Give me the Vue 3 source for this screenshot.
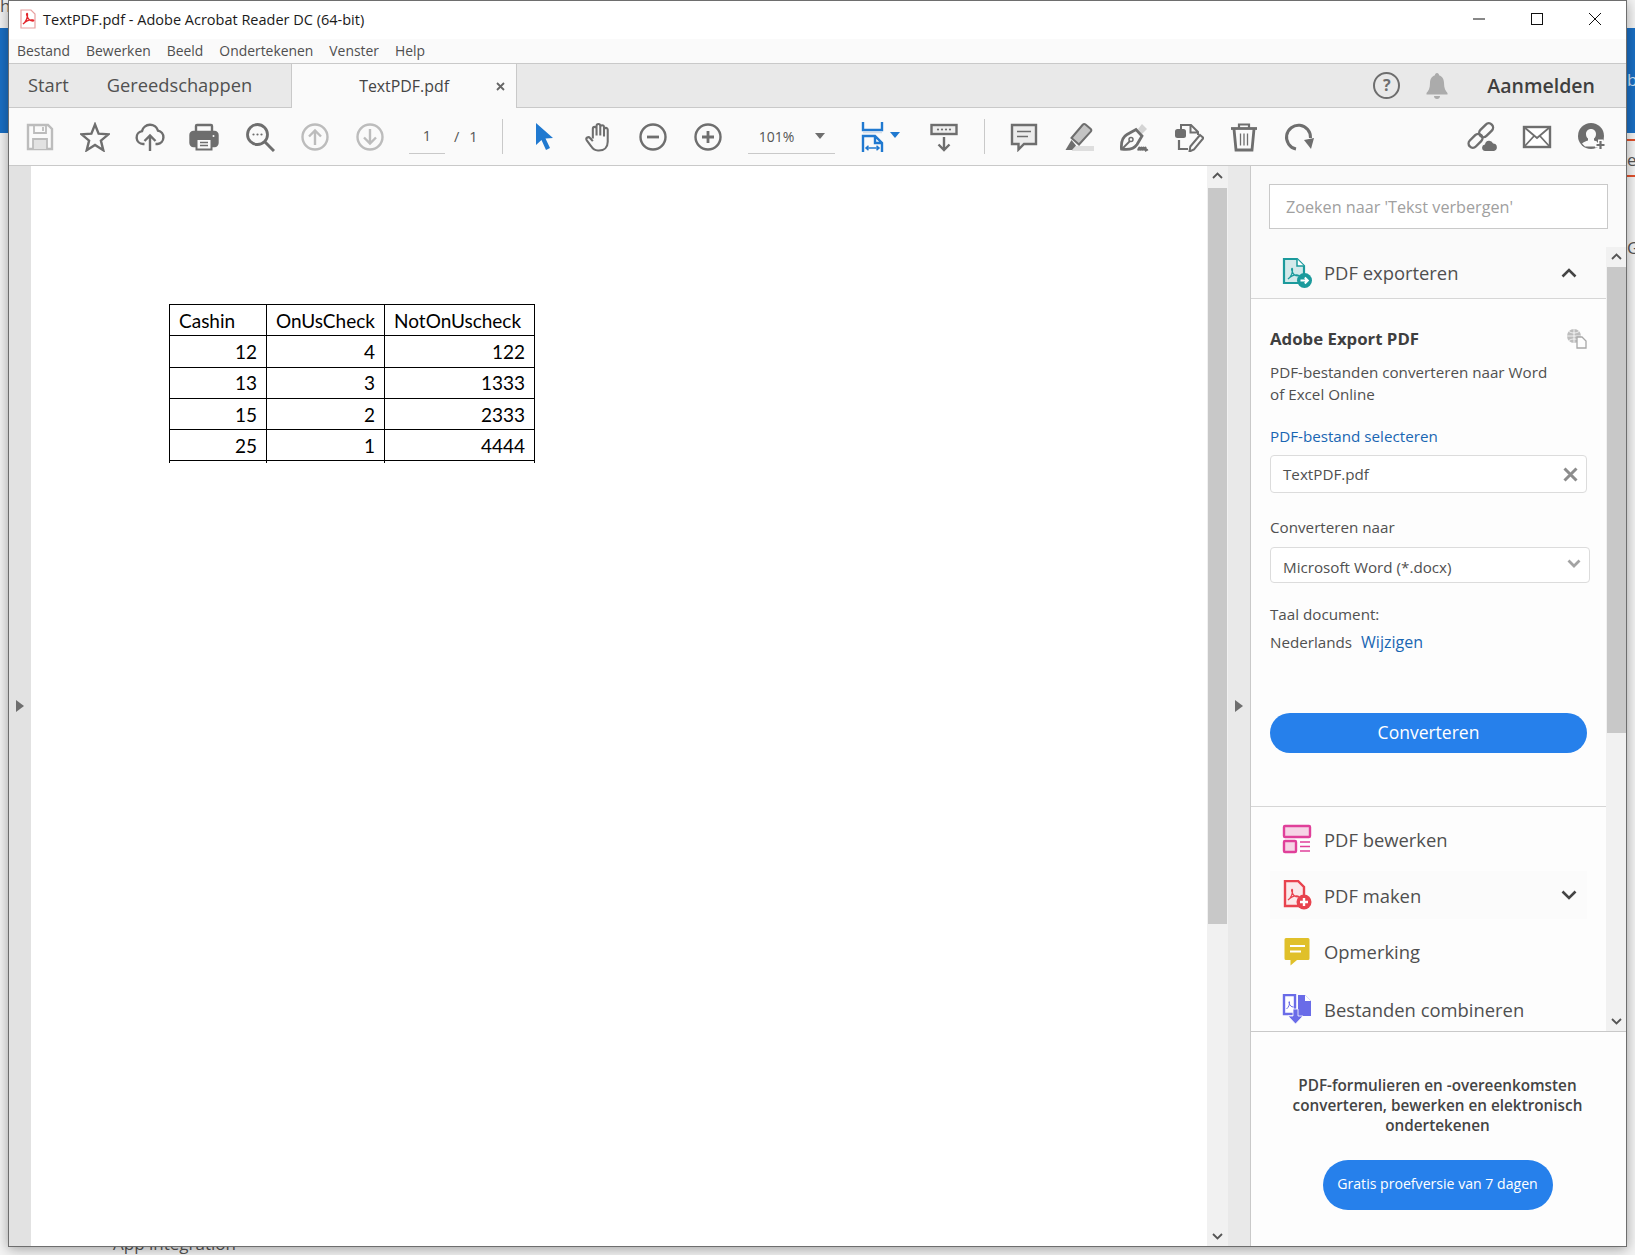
<template>
  <div class="desktop">
    <!-- what is visible behind the Acrobat window -->
    <div class="bg-blue"></div>
    <div class="bg-red bg-red-1"></div>
    <div class="bg-red bg-red-2"></div>
    <span class="bg-text bg-h">h</span>
    <span class="bg-text bg-b">b</span>
    <span class="bg-text bg-e">e</span>
    <span class="bg-text bg-g">G</span>
    <span class="bg-text bg-app">App integration</span>

    <div class="window">
      <!-- title bar -->
      <div class="titlebar">
        <svg class="title-icon" width="16" height="20" viewBox="0 0 16 20">
          <path d="M1 1h10l4 4v14H1z" fill="#fff" stroke="#e8a0a0" stroke-width="1.2" />
          <path d="M3 15c3-2 5-7 4.500-10-.5-1.500-1.500 0-.5 2 1 3 3 5 6 5 1 0 1-1 0-1-3-.5-7 1-10 4z" fill="none" stroke="#e4262c" stroke-width="1.300" />
        </svg>
        <span class="title-text">TextPDF.pdf - Adobe Acrobat Reader DC (64-bit)</span>
        <div class="win-controls">
          <svg width="14" height="14" viewBox="0 0 14 14"><path d="M1 7h12" stroke="#111" stroke-width="1" /></svg>
          <svg width="14" height="14" viewBox="0 0 14 14"><rect x="1.500" y="1.500" width="11" height="11" fill="none" stroke="#111" stroke-width="1" /></svg>
          <svg width="14" height="14" viewBox="0 0 14 14"><path d="M1 1l12 12M13 1L1 13" stroke="#111" stroke-width="1" /></svg>
        </div>
      </div>

      <!-- menu bar -->
      <div class="menubar">
        <span v-for="m in menu" :key="m">{{ m }}</span>
      </div>

      <!-- tabs -->
      <div class="tabbar">
        <span class="tab-start">Start</span>
        <span class="tab-tools">Gereedschappen</span>
        <div class="tab-doc">
          <span class="tab-doc-name">TextPDF.pdf</span>
          <svg class="tab-close" width="9" height="9" viewBox="0 0 9 9"><path d="M1 1l7 7M8 1L1 8" stroke="#666" stroke-width="1.800" /></svg>
        </div>
        <div class="tab-right">
          <div class="help">?</div>
          <svg class="bell" width="26" height="28" viewBox="0 0 26 28">
            <path d="M13 1c-1.300 0-2 1-2 2.200C7.500 4.200 6 7.500 6 11c0 5-1.500 8-3.500 10v1.500h21V21C21.500 19 20 16 20 11c0-3.500-1.500-6.800-5-7.800C15 2 14.300 1 13 1z" fill="#ababab" />
            <path d="M10 24h6c0 1.800-1.300 3-3 3s-3-1.200-3-3z" fill="#ababab" />
          </svg>
          <span class="signin">Aanmelden</span>
        </div>
      </div>

      <!-- toolbar -->
      <div class="toolbar">
        <div class="tool">
          <svg class="ico light" viewBox="0 0 30 30">
            <path d="M3 3h20l4 4v20H3z" />
            <path d="M9 3v8h12V3M18 5v4" stroke-width="1.800" />
            <path d="M8 27V17h14v10" fill="#e2e2e2" stroke-width="1.800" />
          </svg>
        </div>
        <div class="tool">
          <svg class="ico" viewBox="0 0 30 30"><path d="M15 2.500l3.600 9.100 9.900.7-7.600 6.300 2.400 9.600-8.300-5.200-8.300 5.200 2.400-9.600-7.600-6.300 9.900-.7z" /></svg>
        </div>
        <div class="tool">
          <svg class="ico" viewBox="0 0 30 30">
            <path d="M9.500 22H8a6.500 6.500 0 0 1-1-12.900A8.300 8.300 0 0 1 23 8.600 6.800 6.800 0 0 1 22.500 22H20.500" />
            <path d="M15 29V13.500M9.500 19l5.500-5.500 5.500 5.500" />
          </svg>
        </div>
        <div class="tool tool-print">
          <svg class="ico" viewBox="0 0 30 30">
            <rect x="7" y="3" width="16" height="9" rx="1" />
            <rect x="1.500" y="10" width="27" height="14" rx="3" fill="#6e6e6e" />
            <rect x="7.500" y="17" width="15" height="10.500" fill="#fafafa" stroke-width="2" />
            <path d="M11 20.500h8M11 23.500h8" stroke-width="1.400" />
            <circle cx="24.500" cy="14" r="1" fill="#fff" stroke="none" />
          </svg>
        </div>
        <div class="tool">
          <svg class="ico" viewBox="0 0 30 30">
            <circle cx="12.500" cy="12.500" r="10" stroke-width="2.800" />
            <path d="M20 20l9 9" stroke-width="3" />
            <circle cx="8.500" cy="12.500" r="1.100" class="dot" />
            <circle cx="12.500" cy="12.500" r="1.100" class="dot" />
            <circle cx="16.500" cy="12.500" r="1.100" class="dot" />
          </svg>
        </div>
        <div class="tool">
          <svg class="ico light" viewBox="0 0 30 30"><circle cx="15" cy="15" r="12.500" /><path d="M15 23V8.500M9 14.500l6-6 6 6" /></svg>
        </div>
        <div class="tool">
          <svg class="ico light" viewBox="0 0 30 30"><circle cx="15" cy="15" r="12.500" /><path d="M15 7v14.500M9 15.500l6 6 6-6" /></svg>
        </div>

        <div class="page-box"><span>1</span></div>
        <span class="page-sep">/</span>
        <span class="page-total">1</span>
        <div class="divider div-a"></div>

        <div class="tool tool-first">
          <svg class="ico" viewBox="0 0 30 30"><path d="M8 1v22l5.500-5 4.500 10 4-2-4.500-9.500 7.500-.5z" fill="#2079d0" stroke="none" /></svg>
        </div>
        <div class="tool">
          <svg class="ico" viewBox="1 1 27 29">
            <path d="M9.500 17V7.500a1.800 1.800 0 0 1 3.600 0V14M13.100 14V4.800a1.800 1.800 0 0 1 3.600 0V14M16.700 14V6a1.800 1.800 0 0 1 3.600 0V15M20.300 15V8.500a1.800 1.800 0 0 1 3.600 0V20c0 5.500-3.500 8.500-8.500 8.500h-1c-3 0-5-1.500-6.500-4L3.500 18.500c-1.200-2.200 1.800-3.800 3.300-2l2.700 3" stroke-width="2" />
          </svg>
        </div>
        <div class="tool">
          <svg class="ico" viewBox="0 0 30 30"><circle cx="15" cy="15" r="12.500" /><path d="M9 15h12" stroke-width="2.800" /></svg>
        </div>
        <div class="tool">
          <svg class="ico" viewBox="0 0 30 30"><circle cx="15" cy="15" r="12.500" /><path d="M9 15h12M15 9v12" stroke-width="2.800" /></svg>
        </div>

        <div class="zoom-box">
          <span>101%</span>
          <i class="caret"></i>
        </div>

        <div class="tool tool-fit">
          <svg class="ico blue" viewBox="0 0 30 30">
            <path d="M6 0v8h19V0" />
            <path d="M6 10.500h19" stroke="#d5dde6" stroke-width="1.500" />
            <path d="M6 30V14h12l7 7v9M18 14v7h7" />
            <path d="M9 26h13M11.500 23.800L9 26l2.500 2.200M19.500 23.800L22 26l-2.500 2.200" stroke-width="1.500" />
          </svg>
          <i class="caret caret-blue"></i>
        </div>
        <div class="tool tool-read">
          <svg class="ico" viewBox="0 0 30 30">
            <rect x="2.500" y="3" width="25" height="9" fill="#eee" />
            <circle cx="9" cy="7.500" r="1.100" class="dot" />
            <circle cx="13" cy="7.500" r="1.100" class="dot" />
            <circle cx="17" cy="7.500" r="1.100" class="dot" />
            <circle cx="21" cy="7.500" r="1.100" class="dot" />
            <path d="M15 15v13M9.500 22.500L15 28l5.500-5.500" />
          </svg>
        </div>
        <div class="divider div-b"></div>

        <div class="tool tool-comment">
          <svg class="ico" viewBox="0 0 30 30">
            <path d="M3 3h24v19H15l-5.500 5.500V22H3z" fill="#ececec" />
            <path d="M8 9.500h14M8 14.500h11" stroke-width="1.500" />
          </svg>
        </div>
        <div class="tool">
          <svg class="ico" viewBox="0 0 30 30">
            <rect x="8" y="24" width="22" height="5" fill="#dedede" stroke="none" />
            <path d="M21.500 2.500l5 4.200c1 .9 1 2 .2 3L15 22.500l-7.500-6.500L18.500 3c.9-1 2-1.300 3-.5z" fill="#c4c4c4" stroke-width="2" />
            <path d="M7.500 18l-6 10H8l4-4.500z" fill="#6e6e6e" stroke="none" />
          </svg>
        </div>
        <div class="tool">
          <svg class="ico" viewBox="0 0 30 30">
            <path d="M19 7l4-5 5 5-5 5z" fill="#d4d4d4" stroke="none" />
            <path d="M2.500 27c-.5-6 1-12 5.500-14.500l9-5L23 14l-5 8.500C15 27 9 28 2.500 27z" stroke-width="2.800" />
            <path d="M3 27l8-8" stroke-width="1.800" />
            <circle cx="12" cy="17.500" r="2" stroke-width="1.500" />
            <path d="M19 28.500c1-4 2-4 2 0 1-4 2-4 2 0 1-4 2-4 2 0 1-4 2-4 2 0l2-1" stroke-width="1.900" />
          </svg>
        </div>
        <div class="tool">
          <svg class="ico" viewBox="0 0 30 30">
            <rect x="1" y="7" width="11" height="9" rx="2.500" fill="#6e6e6e" stroke="none" />
            <path d="M7 7V3h10l7 7v3M16.500 3v7.500H24" stroke-width="2" />
            <path d="M5 18v9h9" stroke-width="2.200" />
            <path d="M26 13l3.500 3L20 27.500l-4.500 2 .8-5z" stroke-width="2" />
          </svg>
        </div>
        <div class="tool">
          <svg class="ico" viewBox="0 0 30 30">
            <path d="M2 6.500h26" stroke-width="2.800" />
            <path d="M10 6V2.500h10V6" stroke-width="2.200" />
            <path d="M5 7l2 21h16l2-21" stroke-width="2.800" />
            <path d="M11.500 11.500v12M15 11.500v12M18.500 11.500v12" stroke-width="1.300" />
          </svg>
        </div>
        <div class="tool">
          <svg class="ico" viewBox="0 0 30 30">
            <path d="M12 27A12 12 0 1 1 26.500 16" stroke-width="3" />
            <path d="M20 18l10-2-3 11z" fill="#6e6e6e" stroke="none" />
          </svg>
        </div>

        <div class="tool tool-link">
          <svg class="ico" viewBox="0 0 30 30">
            <g transform="rotate(-45 14 13)">
              <rect x="-2" y="9" width="16" height="8.500" rx="4.200" />
              <rect x="13" y="9" width="16" height="8.500" rx="4.200" />
            </g>
            <path d="M18 29.500a3.800 3.800 0 0 1-.5-7.500 4.700 4.700 0 0 1 9-1 4.300 4.300 0 0 1 .5 8.500z" fill="#6e6e6e" stroke="#fafafa" stroke-width="1.200" />
          </svg>
        </div>
        <div class="tool">
          <svg class="ico" viewBox="0 0 30 30">
            <rect x="2" y="5" width="26" height="20" fill="#fff" />
            <path d="M2 5l13 11L28 5M2 25l10.500-11.500M28 25L17.500 13.500" stroke-width="1.800" />
          </svg>
        </div>
        <div class="tool">
          <svg class="ico" viewBox="0 0 30 30">
            <circle cx="14" cy="14" r="13" fill="#6e6e6e" stroke="none" />
            <path d="M14 7c-3 0-5 2.200-5 5 0 2 .8 3.500 2 4.500v2c-2 .6-4.500 1.500-6 3l3 3h12v-5l-3-1v-2c1.200-1 2-2.500 2-4.500 0-2.800-2-5-5-5z" fill="#fafafa" stroke="none" />
            <path d="M18 23h11M23.500 17.500v11" stroke="#fafafa" stroke-width="5" />
            <path d="M19.500 23h8M23.500 19v8" stroke-width="2.200" />
          </svg>
        </div>
      </div>

      <!-- main area -->
      <div class="body">
        <div class="nav-strip"><i class="tri"></i></div>

        <div class="page">
          <table class="sheet">
            <tr>
              <td class="head">Cashin</td>
              <td class="head">OnUsCheck</td>
              <td class="head">NotOnUscheck</td>
            </tr>
            <tr v-for="row in rows" :key="row[0]">
              <td v-for="(cell, i) in row" :key="i">{{ cell }}</td>
            </tr>
            <tr class="stub"><td></td><td></td><td></td></tr>
          </table>
        </div>

        <div class="vscroll doc-scroll">
          <svg class="chev" width="11" height="7" viewBox="0 0 11 7"><path d="M1 6l4.500-4.500L10 6" /></svg>
          <div class="doc-thumb"></div>
          <svg class="chev chev-end" width="11" height="7" viewBox="0 0 11 7"><path d="M1 1l4.500 4.500L10 1" /></svg>
        </div>

        <div class="gutter"><i class="tri"></i></div>

        <!-- tools panel -->
        <aside class="panel">
          <div class="panel-search">
            <div class="search-box">Zoeken naar 'Tekst verbergen'</div>
          </div>

          <div class="panel-mid">
            <div class="panel-list">
              <div class="tool-row tool-row-export">
                <svg class="p-ico" viewBox="0 0 30 30">
                  <path d="M2 1h13l7 7v17H2z" fill="#d3e9ea" stroke="#1b9a9c" stroke-width="2.200" />
                  <path d="M15 1v7h7" fill="#fff" stroke="#1b9a9c" stroke-width="1.500" />
                  <path d="M6 21c3-2 5-7 4.500-10-.5-1.500-1.500 0-.5 2 1 3 3 5 6 5 1 0 1-1 0-1-3-.5-7 1-10 4z" fill="none" stroke="#1b9a9c" stroke-width="1.200" />
                  <circle cx="22.500" cy="22.500" r="7.500" fill="#1b9a9c" />
                  <path d="M18.500 22.500h7M22.800 19.500l3 3-3 3" fill="none" stroke="#fff" stroke-width="2" />
                </svg>
                <span>PDF exporteren</span>
                <svg class="row-chev" width="16" height="10" viewBox="0 0 16 10"><path d="M1.500 8.500L8 2l6.500 6.500" /></svg>
              </div>

              <div class="export-form">
                <div class="form-head">
                  <span>Adobe Export PDF</span>
                  <svg width="21" height="21" viewBox="0 0 21 21">
                    <circle cx="8" cy="8" r="7" fill="#bdbdbd" />
                    <path d="M1 8h14M8 1v14M3 3.500c3 2 7 2 10 0M3 12.500c3-2 7-2 10 0" fill="none" stroke="#fff" stroke-width=".8" />
                    <path d="M11 9h5l4 4v7h-9z" fill="#fdfdfd" stroke="#a8a8a8" stroke-width="1.300" />
                  </svg>
                </div>
                <p class="form-desc">PDF-bestanden converteren naar Word<br />of Excel Online</p>
                <div class="form-link">PDF-bestand selecteren</div>
                <div class="field field-file">
                  <span>TextPDF.pdf</span>
                  <svg width="15" height="15" viewBox="0 0 15 15"><path d="M1.500 1.500l12 12M13.500 1.500l-12 12" stroke="#8c8c8c" stroke-width="3" /></svg>
                </div>
                <div class="form-label">Converteren naar</div>
                <div class="field field-select">
                  <span>Microsoft Word (*.docx)</span>
                  <svg class="sel-chev" width="14" height="9" viewBox="0 0 14 9"><path d="M1.500 1.500L7 7l5.500-5.500" fill="none" stroke="#a3a3a3" stroke-width="2.800" /></svg>
                </div>
                <div class="form-lang">Taal document:</div>
                <div class="form-lang-val">Nederlands <a>Wijzigen</a></div>
                <div class="btn-convert">Converteren</div>
              </div>

              <div class="tool-list">
                <div class="tool-row">
                  <svg class="p-ico" viewBox="0 0 30 30">
                    <rect x="2" y="2" width="26" height="11" rx="1" fill="#f6d4e6" stroke="#e0409a" stroke-width="2.400" />
                    <rect x="2" y="17" width="12" height="11" rx="1" fill="#f6d4e6" stroke="#e0409a" stroke-width="2.400" />
                    <path d="M18 18h10M18 22.500h10M18 27h10" stroke="#e0409a" stroke-width="1.300" />
                  </svg>
                  <span>PDF bewerken</span>
                </div>
                <div class="tool-row tool-row-make">
                  <svg class="p-ico" viewBox="0 0 30 30">
                    <path d="M3 1h13l6 6v19H3z" fill="#fbe9ea" stroke="#e8434e" stroke-width="2.400" />
                    <path d="M6 20c3-2 5-7 4.500-10-.5-1.500-1.500 0-.5 2 1 3 3 5 6 5 1 0 1-1 0-1-3-.5-7 1-10 4z" fill="none" stroke="#e8434e" stroke-width="1.200" />
                    <circle cx="22" cy="22" r="7.500" fill="#e8434e" />
                    <path d="M18 22h8M22 18v8" stroke="#fff" stroke-width="2.400" />
                  </svg>
                  <span>PDF maken</span>
                  <svg class="row-chev" width="16" height="10" viewBox="0 0 16 10"><path d="M1.500 1.500L8 8l6.500-6.500" /></svg>
                </div>
                <div class="tool-row">
                  <svg class="p-ico" viewBox="0 0 30 30">
                    <path d="M4 2h22a1.500 1.500 0 0 1 1.500 1.500v19A1.500 1.500 0 0 1 26 24H15l-6.500 5.500V24H4a1.500 1.500 0 0 1-1.500-1.500v-19A1.500 1.500 0 0 1 4 2z" fill="#e0c02a" />
                    <path d="M8 10h15M8 15.500h11" stroke="#fff" stroke-width="2.200" />
                  </svg>
                  <span>Opmerking</span>
                </div>
                <div class="tool-row tool-row-last">
                  <svg class="p-ico" viewBox="0 0 30 30">
                    <path d="M2 1h11v19H2z" fill="#fff" stroke="#6a6ce8" stroke-width="2.400" />
                    <path d="M4.500 15c2-1.500 3.500-5 3-7-.3-1-1 0-.3 1.500.8 2 2 3.500 4.300 3.500" fill="none" stroke="#6a6ce8" stroke-width="1" />
                    <path d="M16 1h7l6 6v15H16z" fill="#6a6ce8" />
                    <path d="M23 1v6h6" fill="#fff" />
                    <path d="M11 15h5v7h5l-7.500 8L6 22h5z" fill="#6a6ce8" stroke="#fff" stroke-width=".8" />
                  </svg>
                  <span>Bestanden combineren</span>
                </div>
              </div>
            </div>

            <div class="vscroll panel-scroll">
              <svg class="chev" width="11" height="7" viewBox="0 0 11 7"><path d="M1 6l4.500-4.500L10 6" /></svg>
              <div class="panel-thumb"></div>
              <svg class="chev chev-end" width="11" height="7" viewBox="0 0 11 7"><path d="M1 1l4.500 4.500L10 1" /></svg>
            </div>
          </div>

          <div class="panel-promo">
            <p>PDF-formulieren en -overeenkomsten<br />converteren, bewerken en elektronisch<br />ondertekenen</p>
            <div class="btn-trial">Gratis proefversie van 7 dagen</div>
          </div>
        </aside>
      </div>
    </div>
  </div>
</template>

<script setup>
const menu = ['Bestand', 'Bewerken', 'Beeld', 'Ondertekenen', 'Venster', 'Help']

const rows = [
  [12, 4, 122],
  [13, 3, 1333],
  [15, 2, 2333],
  [25, 1, 4444]
]
</script>

<style scoped>
.desktop {
  position: relative;
  width: 1635px;
  height: 1255px;
  overflow: hidden;
  background: #f4f4f4;
  font-family: "Open Sans", "Noto Sans", sans-serif;
  color: #4b4b4b;
}

.bg-blue {
  position: absolute;
  left: 0;
  top: 28px;
  width: 1635px;
  height: 105px;
  background: #1a6fc4;
}
.bg-red {
  position: absolute;
  left: 1600px;
  width: 35px;
  height: 2px;
  background: #e2512c;
}
.bg-red-1 { top: 139px; }
.bg-red-2 { top: 175px; }
.bg-text {
  position: absolute;
  font-size: 17px;
  line-height: 20px;
  color: #555;
}
.bg-h { left: 0; top: -4px; }
.bg-b { left: 1627px; top: 70px; color: #cfe2f5; }
.bg-e { left: 1627px; top: 150px; }
.bg-g { left: 1627px; top: 238px; }
.bg-app { left: 113px; top: 1234px; }

.window {
  position: absolute;
  left: 8px;
  top: 0;
  width: 1619px;
  height: 1247px;
  box-sizing: border-box;
  border: 1px solid #6e6e6e;
  background: #fff;
  box-shadow: 0 2px 12px rgba(0, 0, 0, 0.35);
  display: flex;
  flex-direction: column;
}

.titlebar {
  height: 38px;
  flex-shrink: 0;
  box-sizing: border-box;
  padding: 0 0 2px 11px;
  display: flex;
  align-items: center;
  background: #fff;
}
.title-icon { margin-right: 7px; }
.title-text {
  font-size: 14.500px;
  color: #1a1a1a;
}
.win-controls {
  margin-left: auto;
  display: flex;
  gap: 44px;
  padding-right: 24px;
}

.menubar {
  height: 25px;
  flex-shrink: 0;
  box-sizing: border-box;
  padding: 0 0 2px 8px;
  display: flex;
  align-items: center;
  gap: 16px;
  background: #fafafa;
  border-bottom: 1px solid #c9c9c9;
  font-size: 13.900px;
  color: #4f4f4f;
}

.tabbar {
  height: 43px;
  flex-shrink: 0;
  display: flex;
  align-items: stretch;
  background: #e9e9e9;
  border-bottom: 1px solid #c9c9c9;
  font-size: 18.300px;
  color: #505050;
}
.tab-start {
  align-self: center;
  margin-left: 19px;
  margin-bottom: 2px;
}
.tab-tools {
  align-self: center;
  margin-left: 38px;
  margin-bottom: 2px;
}
.tab-doc {
  width: 226px;
  margin-left: 39px;
  margin-bottom: -1px;
  box-sizing: border-box;
  display: flex;
  align-items: center;
  background: #fafafa;
  border-left: 1px solid #c9c9c9;
  border-right: 1px solid #c9c9c9;
  font-size: 15.900px;
  color: #444;
}
.tab-doc-name { margin-left: 67px; }
.tab-close { margin-left: 47px; }
.tab-right {
  margin-left: auto;
  display: flex;
  align-items: center;
  padding-right: 31px;
}
.help {
  width: 27px;
  height: 27px;
  box-sizing: border-box;
  border: 2.500px solid #6e6e6e;
  border-radius: 50%;
  text-align: center;
  font-size: 16px;
  line-height: 22px;
  font-weight: 700;
  color: #6e6e6e;
}
.bell { margin-left: 24px; }
.signin {
  margin-left: 37px;
  font-size: 19.500px;
  font-weight: 600;
  color: #3f3f3f;
}

.toolbar {
  height: 58px;
  flex-shrink: 0;
  box-sizing: border-box;
  display: flex;
  align-items: center;
  padding-left: 3px;
  background: #fafafa;
  border-bottom: 1px solid #c9c9c9;
}
.tool {
  width: 55px;
  flex-shrink: 0;
  display: flex;
  justify-content: center;
  align-items: center;
}
.tool-print svg { margin-left: -2px; }
.ico {
  width: 30px;
  height: 30px;
  fill: none;
  stroke: #6e6e6e;
  stroke-width: 2.400;
}
.ico.light { stroke: #bcbcbc; }
.ico.blue { stroke: #2079d0; }
.dot {
  fill: #6e6e6e;
  stroke: none;
}

.page-box {
  width: 36px;
  height: 34px;
  margin-left: 12px;
  box-sizing: border-box;
  border-bottom: 1px solid #c9c9c9;
  text-align: center;
  font-size: 14.500px;
  line-height: 32px;
  color: #555;
}
.page-sep {
  margin-left: 9px;
  font-size: 14.500px;
  color: #555;
}
.page-total {
  margin-left: 10px;
  font-size: 14.500px;
  color: #555;
}
.divider {
  width: 1px;
  height: 35px;
  background: #c9c9c9;
}
.div-a { margin-left: 24px; }
.tool-first { margin-left: 13px; }
.zoom-box {
  width: 87px;
  height: 34px;
  margin-left: 12px;
  box-sizing: border-box;
  display: flex;
  align-items: center;
  border-bottom: 1px solid #c9c9c9;
  font-size: 14px;
  color: #555;
}
.zoom-box span { margin-left: 11px; }
.caret {
  display: block;
  width: 0;
  height: 0;
  border-left: 5px solid transparent;
  border-right: 5px solid transparent;
  border-top: 6px solid #6e6e6e;
}
.zoom-box .caret { margin-left: 21px; }
.caret-blue {
  border-top-color: #2079d0;
  margin-left: 3px;
  margin-bottom: 4px;
}
.tool-fit {
  width: 51px;
  margin-left: 22px;
  justify-content: flex-start;
}
.tool-read { margin-left: 9px; }
.div-b { margin-left: 12px; }
.tool-comment { margin-left: 12px; }
.tool-link { margin-left: 128px; }

.body {
  flex: 1;
  min-height: 0;
  display: flex;
}
.nav-strip {
  width: 22px;
  flex-shrink: 0;
  background: #e2e2e2;
  display: flex;
  align-items: center;
  justify-content: center;
}
.tri {
  display: block;
  width: 0;
  height: 0;
  border-top: 6px solid transparent;
  border-bottom: 6px solid transparent;
  border-left: 8px solid #6e6e6e;
}
.page {
  flex: 1;
  min-width: 0;
  background: #fff;
  padding: 138px 0 0 138px;
}
.sheet {
  border-collapse: collapse;
  font-family: Lato, "Open Sans", sans-serif;
  font-size: 19px;
  color: #000;
}
.sheet td {
  height: 31.300px;
  padding: 0 9px;
  box-sizing: border-box;
  border: 1px solid #000;
  text-align: right;
  white-space: nowrap;
}
.sheet td.head { text-align: left; }
.sheet td:nth-child(1) { width: 97px; }
.sheet td:nth-child(2) { width: 118px; }
.sheet td:nth-child(3) { width: 150px; }
.sheet .stub td {
  height: 2px;
  padding: 0;
  border-bottom: none;
}

.vscroll {
  flex-shrink: 0;
  display: flex;
  flex-direction: column;
  align-items: center;
  background: #f1f1f1;
}
.chev {
  flex-shrink: 0;
  margin: 6px 0;
  fill: none;
  stroke: #555;
  stroke-width: 1.800;
}
.doc-scroll { width: 21px; }
.doc-thumb {
  width: 19px;
  height: 736px;
  margin-top: 3px;
  background: #c8c8c8;
}
.chev-end { margin-top: auto; }
.gutter {
  width: 22px;
  flex-shrink: 0;
  background: #e9e9e9;
  display: flex;
  align-items: center;
  justify-content: center;
}

.panel {
  width: 376px;
  flex-shrink: 0;
  box-sizing: border-box;
  border-left: 1px solid #c9c9c9;
  background: #fdfdfd;
  display: flex;
  flex-direction: column;
}
.panel-search {
  height: 81px;
  flex-shrink: 0;
  box-sizing: border-box;
  padding: 18px 0 0 18px;
  background: #fafafa;
}
.search-box {
  width: 339px;
  height: 45px;
  box-sizing: border-box;
  padding-left: 16px;
  border: 1px solid #c9c9c9;
  background: #fff;
  font-size: 16.200px;
  line-height: 45px;
  color: #a0a0a0;
}
.panel-mid {
  height: 784px;
  flex-shrink: 0;
  display: flex;
  border-bottom: 1px solid #c9c9c9;
  overflow: hidden;
}
.panel-list {
  width: 355px;
  flex-shrink: 0;
  overflow: hidden;
}
.panel-scroll { width: 20px; }
.panel-thumb {
  width: 19px;
  height: 466px;
  margin-top: 1px;
  background: #c8c8c8;
}

.tool-row {
  height: 56px;
  box-sizing: border-box;
  display: flex;
  align-items: center;
  padding-left: 31px;
  font-size: 18.400px;
  color: #4f4f4f;
}
.p-ico {
  width: 30px;
  height: 30px;
  margin-right: 12px;
  flex-shrink: 0;
}
.row-chev {
  margin-left: auto;
  margin-right: 29px;
  fill: none;
  stroke: #444;
  stroke-width: 2.600;
}
.tool-row-export {
  height: 52px;
  border-bottom: 1px solid #d6d6d6;
  background: #fafafa;
}
.tool-row-make {
  width: 317px;
  height: 48px;
  margin: 4px 0 4px 19px;
  padding-left: 12px;
  background: #fbfbfb;
}
.tool-row-make .row-chev { margin-right: 10px; }
.tool-row-last { height: 60px; }

.export-form {
  padding: 27px 0 53px 19px;
  border-bottom: 1px solid #d6d6d6;
  font-size: 15.200px;
  color: #505050;
}
.form-head {
  display: flex;
  align-items: center;
  justify-content: space-between;
  width: 317px;
  height: 24px;
  font-size: 16.800px;
  font-weight: 700;
  color: #3f3f3f;
}
.form-desc {
  margin: 12px 0 0;
  line-height: 21.500px;
}
.form-link {
  margin-top: 21px;
  line-height: 20px;
  color: #1a66b3;
}
.field {
  height: 38px;
  margin-top: 9px;
  box-sizing: border-box;
  display: flex;
  align-items: center;
  justify-content: space-between;
  padding: 0 8px 0 12px;
  border: 1px solid #dcdcdc;
  border-radius: 4px;
  background: #fff;
  color: #505050;
}
.field-file { width: 317px; }
.field-select {
  width: 320px;
  height: 36px;
  margin-top: 10px;
}
.field-select span { padding-top: 3px; }
.sel-chev { margin-bottom: 4px; }
.form-label {
  margin-top: 24px;
  line-height: 20px;
}
.form-lang {
  margin-top: 21px;
  line-height: 20px;
}
.form-lang-val {
  margin-top: 8px;
  line-height: 20px;
}
.form-lang-val a {
  margin-left: 5px;
  font-size: 16px;
  color: #1a66b3;
}
.btn-convert {
  width: 317px;
  height: 40px;
  margin-top: 61px;
  border-radius: 20px;
  background: #2680eb;
  color: #fff;
  text-align: center;
  font-size: 17.500px;
  line-height: 38px;
}
.tool-list { padding-top: 4px; }

.panel-promo {
  flex: 1;
  box-sizing: border-box;
  padding: 43px 2px 0 0;
  display: flex;
  flex-direction: column;
  align-items: center;
  font-size: 15.300px;
  font-weight: 600;
  color: #444;
}
.panel-promo p {
  margin: 0;
  line-height: 20px;
  text-align: center;
  white-space: nowrap;
}
.btn-trial {
  width: 230px;
  height: 50px;
  margin-top: 25px;
  border-radius: 25px;
  background: #2680eb;
  color: #fff;
  text-align: center;
  font-size: 14.100px;
  font-weight: 400;
  line-height: 48px;
}
</style>

<style>
html, body {
  margin: 0;
  background: #f4f4f4;
  overflow: hidden;
}
</style>
